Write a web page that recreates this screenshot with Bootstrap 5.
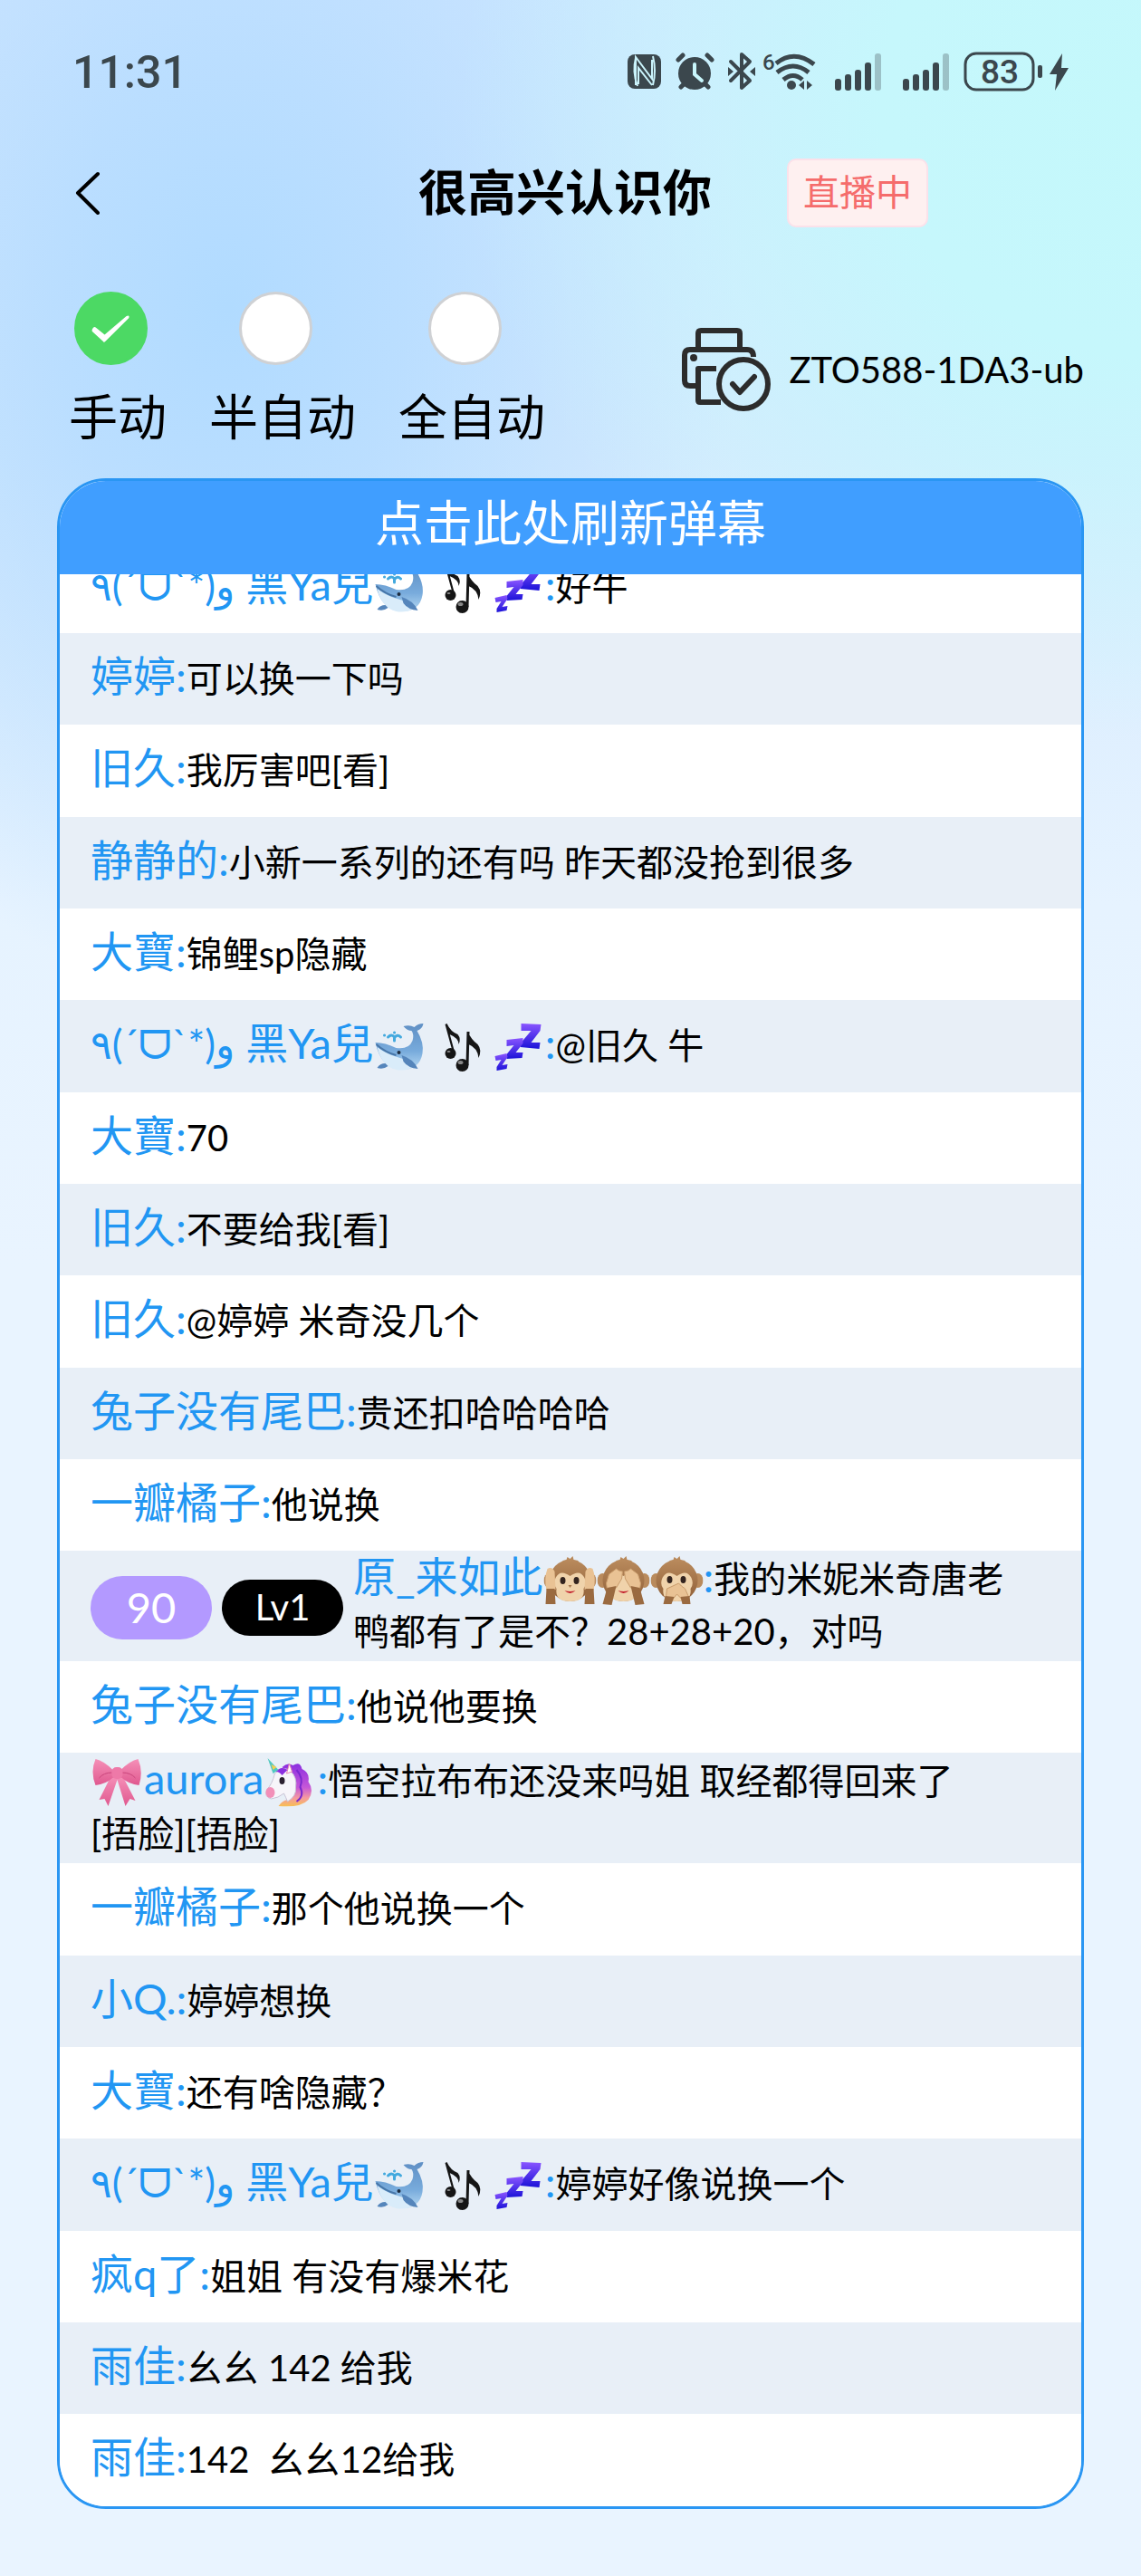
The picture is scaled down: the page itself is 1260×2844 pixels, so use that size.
<!DOCTYPE html>
<html lang="zh-CN">
<head>
<meta charset="utf-8">
<meta name="viewport" content="width=device-width, initial-scale=1">
<title>很高兴认识你</title>
<link rel="stylesheet" href="https://cdn.jsdelivr.net/npm/bootstrap@5.3.0/dist/css/bootstrap.min.css">
<style>
  body {
    font-family: Lato, "Noto Sans CJK SC", sans-serif;
    font-size: 40px;
    color: #000;
    background:
      radial-gradient(ellipse 780px 700px at 102% 4%, #c4f8fb 0%, #c6f7fc 40%, rgba(206, 244, 254, 0) 100%),
      radial-gradient(ellipse 560px 760px at 20% 340px, #b1dbff 0%, rgba(184, 221, 255, .9) 35%, rgba(210, 232, 255, 0) 100%),
      linear-gradient(#d0e6ff 0, #d5eafe 500px, #e6f3ff 1000px, #e9f4ff 1400px);
    background-repeat: no-repeat;
    background-color: #e9f4ff;
  }
  .status-bar { height: 156px; padding: 0 79px 0 80px; color: #3b474d; }
  .status-bar time { font: 500 50px/60px Roboto, sans-serif; padding-top: 4px; }
  .status-icons { gap: 8px; }
  .status-icons svg { height: 46px; fill: currentColor; }
  .status-icons text { font-family: Roboto, sans-serif; font-weight: 500; }
  .title-bar { display: grid; grid-template-columns: 1fr auto 1fr; align-items: center; height: 114px; padding: 0 75px 0 63px; }
  .title-bar h1 { font-size: 54px; line-height: 72px; }
  .back-btn { width: 66px; padding: 0 18px; text-align: left; }
  .live-tag { margin-left: 83px; padding: 0 16px; height: 76px; line-height: 70px; color: #f56c6c; background: #fef0f0; border: 2px solid #fbe1ea; border-radius: 10px; }
  .mode-bar { height: 258px; padding: 52px 63px 0 76px; }
  .mode-group { gap: 47px; }
  .mode-item { font-size: 54px; line-height: 80px; gap: 18px; }
  .mode-item .form-check-input { width: 81px; height: 81px; margin: 0 16px 0 0; border: 3px solid #cfd1d4; background-color: #fff; float: none; }
  .mode-item .form-check-input:checked {
    border-color: #4cd964; background-color: #4cd964; background-size: 100% 100%;
    background-image: url("data:image/svg+xml,%3Csvg xmlns='http://www.w3.org/2000/svg' viewBox='0 0 81 81'%3E%3Cpath fill='%23fff' d='M18 42q2-5 5-2l10 8L59 26q4-2 3 2L34 56q-2 2-3 0L18 44z'/%3E%3C/svg%3E");
  }
  .printer { gap: 20px; color: #000; height: 92px; margin-top: 40px; }
  .chat-card { margin: 0 63px 75px; border: 3px solid #2a96f3; border-radius: 54px; overflow: hidden; background: #fff; }
  .refresh-btn { width: calc(100% + 6px); height: 106px; margin: -3px -3px 0; border: 0; border-radius: 0; color: #fff; background: #409eff; font-size: 54px; line-height: 72px; padding: 0 0 6px; }
  .refresh-btn:hover { color: #fff; background: #409eff; }
  .chat-list { overflow: hidden; }
  .chat-row { display: flex; align-items: center; min-height: 101px; padding: 2px 66px 4px 34px; line-height: 58px; background: #fff; }
  .chat-row:nth-child(3n) { min-height: 102px; }
  .chat-row:nth-child(even) { background: #e8eff7; }
  .chat-row:first-child { margin-top: -36px; }
  .msg { white-space: pre-wrap; }
  .who { font-size: 47px; line-height: 52px; color: #2196f3; font-family: Lato, "Noto Sans CJK SC", "DejaVu Sans", sans-serif; }
  .kao { font-size: 44px; }
  .emo { width: 59px; height: 54px; vertical-align: -8px; margin: -6px 0; }
  .pill { flex: none; width: 134px; border-radius: 36px; color: #fff; text-align: center; margin: 6px 11px 0 0; }
  .pill-age { height: 70px; line-height: 68px; font-size: 47px; background: #b399ff; }
  .pill-lv { height: 62px; line-height: 60px; background: #000; }
</style>
<script src="https://cdn.jsdelivr.net/npm/bootstrap@5.3.0/dist/js/bootstrap.bundle.min.js"></script>
</head>
<body>

<svg width="0" height="0" class="position-absolute" aria-hidden="true">
  <defs>
    <linearGradient id="gWhale" x1="0" y1="0" x2="0" y2="1"><stop offset="0" stop-color="#5f8fc4"/><stop offset=".6" stop-color="#78abdc"/><stop offset="1" stop-color="#b5d8f2"/></linearGradient>
    <linearGradient id="gZ" x1="0" y1="0" x2="0" y2="1"><stop offset="0" stop-color="#8a55ff"/><stop offset="1" stop-color="#1b12d8"/></linearGradient>
    <linearGradient id="gFur" x1="0" y1="0" x2="0" y2="1"><stop offset="0" stop-color="#b98a5c"/><stop offset="1" stop-color="#8f5f38"/></linearGradient>
    <linearGradient id="gBow" x1="0" y1="0" x2="0" y2="1"><stop offset="0" stop-color="#f590b8"/><stop offset="1" stop-color="#e0588f"/></linearGradient>
    <linearGradient id="gMane" x1="0" y1="0" x2="0" y2="1"><stop offset="0" stop-color="#8b2fe0"/><stop offset=".55" stop-color="#c557d8"/><stop offset=".8" stop-color="#f59aa0"/><stop offset="1" stop-color="#f7c052"/></linearGradient>
    <symbol id="whale" viewBox="0 0 58 54">
      <path fill="url(#gWhale)" d="M1 22Q12 22 24 28Q38 30 42 20Q44 13 41 9Q36 9 32 4Q39 2 44 5Q48 1 54 1Q53 7 47 9Q55 22 53 34Q50 52 30 52Q8 52 1 22Z"/>
      <path fill="#d9ecfa" d="M3 27Q14 35 25 38Q37 41 43 49Q34 54 24 52Q8 48 3 27Z"/>
      <path fill="#5585bb" d="M30 36Q43 40 48 51Q37 50 32 43ZM12 45Q6 45 3 50Q10 52 15 48Z"/>
      <path fill="none" stroke="#4776a8" stroke-width="2" d="M2 24Q12 33 24 36"/>
      <circle cx="27" cy="33" r="2" fill="#1d2c3f"/>
      <path fill="none" stroke="#43a9de" stroke-width="3" stroke-linecap="round" d="M22 20V16Q19 12 15 16M22 17Q25 12 29 16M11 14h.1M22 11h.1"/>
    </symbol>
    <symbol id="notes" viewBox="0 0 58 54">
      <g fill="#151515"><ellipse cx="13" cy="34" rx="6" ry="6"/><path d="M9 1L18 34L16 35L7 2ZM9 1Q13 10 21 13Q25 18 22 24Q22 17 12 13Z"/>
      <ellipse cx="26" cy="47" rx="7" ry="7"/><path d="M31 10H34L33 47H30ZM32 10Q36 19 43 24Q48 30 44 39Q43 28 33 24Z"/></g>
      <ellipse cx="11" cy="32" rx="2" ry="1" fill="#888"/><ellipse cx="24" cy="44" rx="3" ry="2" fill="#888"/>
    </symbol>
    <symbol id="zzz" viewBox="0 0 58 54">
      <g fill="url(#gZ)"><path d="M32 1L54 2L53 9L43 22L53 22L52 29L31 27L32 22L43 9L32 9Z"/><path d="M16 19L34 17L34 23L26 33L34 33L33 39L16 40L16 35L24 25L16 26Z"/><path d="M3 37L16 34L17 38L11 47L17 46L16 51L5 53L5 49L10 41L4 42Z"/></g>
    </symbol>
    <symbol id="monkey" viewBox="0 0 58 54">
      <path fill="#b98a5c" d="M21 5L25 4L26 1L29 3L32 0L33 4L38 5V10H20Z"/>
      <ellipse cx="6" cy="27" rx="6" ry="8" fill="#b98a5c"/><ellipse cx="52" cy="27" rx="6" ry="8" fill="#b98a5c"/>
      <ellipse cx="29" cy="27" rx="23" ry="23" fill="url(#gFur)"/>
      <path fill="#f0d3ab" d="M29 22Q18 14 13 24Q10 31 14 36Q12 50 29 50Q46 50 44 36Q48 31 45 24Q40 14 29 22Z"/>
    </symbol>
    <symbol id="monkeyHear" viewBox="0 0 58 54">
      <use href="#monkey"/>
      <ellipse cx="21" cy="27" rx="3" ry="4" fill="#33241f"/><ellipse cx="36" cy="27" rx="3" ry="4" fill="#33241f"/>
      <path fill="#a87950" d="M27 32h4l-2 3z"/><path fill="#c4202c" d="M23 38Q29 40 35 38Q29 44 23 38Z"/>
      <path fill="#e9c294" d="M4 14Q9 11 12 17L13 37L3 38Q0 24 4 14ZM54 14Q49 11 46 17L45 37L55 38Q58 24 54 14Z"/>
      <path fill="#9a6a40" d="M3 36H12L13 53H2ZM46 36H55L56 53H45Z"/>
    </symbol>
    <symbol id="monkeySee" viewBox="0 0 58 54">
      <use href="#monkey"/>
      <path fill="#c4202c" d="M23 38Q29 40 35 38Q29 44 23 38Z"/>
      <path fill="#e9c294" stroke="#c99c6c" stroke-width="1" d="M10 30L13 20L21 14L24 16L28 17L27 25L21 35L11 37ZM48 30L45 20L37 14L34 16L30 17L31 25L37 35L47 37Z"/>
      <path fill="#9a6a40" d="M11 35L21 33L16 54L6 53ZM47 35L37 33L42 54L52 53Z"/>
    </symbol>
    <symbol id="monkeySpeak" viewBox="0 0 58 54">
      <use href="#monkey"/>
      <ellipse cx="21" cy="26" rx="3" ry="4" fill="#33241f"/><ellipse cx="36" cy="26" rx="3" ry="4" fill="#33241f"/>
      <path fill="#e9c294" stroke="#c99c6c" stroke-width="1" d="M17 45L18 36L31 30L34 33L38 36L42 45L35 48L29 42L24 48Z"/>
      <path fill="#9a6a40" d="M16 44L26 45L23 53H14ZM33 45L43 44L44 53H35Z"/>
    </symbol>
    <symbol id="bow" viewBox="0 0 58 54">
      <path fill="url(#gBow)" d="M22 20L9 46L15 45L19 53L29 24L38 53L43 45L49 47L35 20Z"/>
      <path fill="url(#gBow)" d="M24 13Q14 3 5 1Q-1 15 5 30Q16 29 25 21ZM33 13Q43 3 52 1Q58 15 53 30Q42 29 33 21Z"/>
      <path fill="none" stroke="#c9457c" stroke-width="1" d="M23 16Q14 16 9 22M34 16Q44 16 49 22"/>
      <rect x="23" y="10" width="12" height="13" rx="5" fill="#ee79a8"/>
    </symbol>
    <symbol id="unicorn" viewBox="0 0 58 54">
      <path fill="url(#gMane)" d="M20 10Q26 4 32 8Q40 3 42 12Q51 16 49 26Q56 36 49 46Q41 55 16 53Q20 47 26 46L28 18Z"/>
      <path fill="#f7f5fa" stroke="#c9c3d6" stroke-width="1" d="M12 17Q20 8 29 14Q37 21 35 33Q36 42 26 48Q24 43 22 39Q16 44 8 45Q0 43 3 35Q9 29 12 17Z"/>
      <ellipse cx="7" cy="38" rx="5" ry="6" fill="#f28fb8"/><path fill="#fff" stroke="#e783b5" d="M25 17L28 6L31 15Z"/>
      <path fill="#8b2fe0" d="M13 15Q19 8 26 13L20 19Q17 15 13 15Z"/><ellipse cx="20" cy="25" rx="3" ry="4" fill="#2b2030"/>
      <path fill="#52c8c0" d="M4 0L16 13L10 17Z"/><path fill="#f5cf4f" d="M8 7L14 10L10 13Z"/>
      <path fill="none" stroke="#7a28cf" stroke-width="2" d="M36 13Q44 22 40 32Q45 42 36 48"/>
    </symbol>
  </defs>
</svg>

<header>
  <div class="status-bar d-flex align-items-center justify-content-between">
    <time>11:31</time>
    <div class="status-icons d-flex align-items-center">
      <svg width="45" viewBox="0 0 45 46" role="img" aria-label="NFC"><rect y="5" width="37" height="38" rx="8"/><path fill="none" stroke="#cbf4fc" stroke-width="2" d="M9 39V8L27 32V11M9 9Q5 24 11 40M27 39L12 20V38M28 7Q32 23 28 39"/></svg>
      <svg width="50" viewBox="0 0 50 46" role="img" aria-label="闹钟"><circle cx="21" cy="26" r="18"/><path stroke="currentColor" stroke-width="5" stroke-linecap="round" d="M3 11L8 6M40 11L35 6M6 41L10 37M36 41L32 37"/><path fill="none" stroke="#c8f6fb" stroke-width="4" stroke-linecap="round" d="M21 16V27L29 34"/></svg>
      <svg width="30" viewBox="0 0 30 46" role="img" aria-label="蓝牙"><path fill="none" stroke="currentColor" stroke-width="4" stroke-linejoin="round" stroke-linecap="round" d="M3 13L24 34L15 42V5L24 13L3 34"/><path d="M0 19L6 24L0 29ZM30 19L24 24L30 29Z"/></svg>
      <svg width="72" viewBox="0 0 72 46" role="img" aria-label="Wi-Fi 6"><text x="0" y="22" font-size="24">6</text><path fill="none" stroke="currentColor" stroke-width="5" d="M15 15Q35 -1 57 16M16 25Q34 11 51 25M23 33Q34 24 44 33"/><circle cx="32" cy="39" r="5"/><path d="M40 39L46 34V44ZM55 39L49 34V44Z"/></svg>
      <svg width="67" viewBox="0 0 67 46" role="img" aria-label="信号"><rect y="32" width="7" height="13" rx="3"/><rect x="11" y="27" width="7" height="18" rx="3"/><rect x="22" y="22" width="7" height="23" rx="3"/><rect x="33" y="14" width="7" height="31" rx="3"/><rect x="44" y="4" width="7" height="41" rx="3" opacity=".3"/></svg>
      <svg width="59" viewBox="0 0 59 46" role="img" aria-label="信号"><rect y="32" width="7" height="13" rx="3"/><rect x="11" y="27" width="7" height="18" rx="3"/><rect x="22" y="22" width="7" height="23" rx="3"/><rect x="33" y="14" width="7" height="31" rx="3"/><rect x="44" y="4" width="7" height="41" rx="3" opacity=".3"/></svg>
      <svg width="87" viewBox="0 0 87 46" role="img" aria-label="电量 83%"><rect x="2" y="4" width="75" height="40" rx="12" fill="none" stroke="currentColor" stroke-width="3"/><rect x="82" y="17" width="5" height="14" rx="2"/><text x="40" y="37" font-size="37" text-anchor="middle">83</text></svg>
      <svg width="22" viewBox="0 0 22 46" role="img" aria-label="充电中"><path d="M14 4L0 27H8L6 45L21 20H13Z"/></svg>
    </div>
  </div>

  <div class="title-bar">
    <button type="button" class="btn back-btn" aria-label="返回"><svg class="d-block" width="30" height="48" viewBox="0 0 30 48" fill="none" stroke="#000" stroke-width="4" stroke-linecap="round" stroke-linejoin="round"><path d="M26 3L4 24L26 46"/></svg></button>
    <h1 class="m-0 fw-bold">很高兴认识你</h1>
    <div><span class="live-tag d-inline-block">直播中</span></div>
  </div>

  <div class="mode-bar d-flex justify-content-between align-items-start">
    <div class="mode-group d-flex">
      <div class="mode-item d-flex flex-column align-items-center"><input class="form-check-input" type="radio" name="mode" id="modeManual" checked><label for="modeManual">手动</label></div>
      <div class="mode-item d-flex flex-column align-items-center"><input class="form-check-input" type="radio" name="mode" id="modeSemi"><label for="modeSemi">半自动</label></div>
      <div class="mode-item d-flex flex-column align-items-center"><input class="form-check-input" type="radio" name="mode" id="modeAuto"><label for="modeAuto">全自动</label></div>
    </div>
    <a href="#" class="printer d-flex align-items-center text-decoration-none">
      <svg width="98" height="92" viewBox="0 0 98 92" fill="none" stroke="#2c2c2c" stroke-width="6" stroke-linecap="butt" stroke-linejoin="round" aria-hidden="true">
        <path d="M18 24V6Q18 3 21 3H61Q64 3 64 6V24"/>
        <path d="M18 64H9Q3 64 3 58V30Q3 24 9 24H72Q79 24 79 32"/>
        <path d="M38 45H18V80Q18 82 20 82H43"/>
        <circle cx="13" cy="33" r="4" fill="#2c2c2c" stroke="none"/>
        <circle cx="68" cy="62" r="27"/><path stroke-linecap="round" d="M56 62L64 71L80 54"/>
      </svg>
      <span>ZTO588-1DA3-ub</span>
    </a>
  </div>
</header>

<main class="chat-card">
  <button type="button" class="refresh-btn btn d-block">点击此处刷新弹幕</button>
  <div class="chat-list">
    <div class="chat-row"><div class="msg"><span class="who"><span class="kao">٩(ˊᗜˋ*)و</span> 黑Ya兒<svg class="emo"><use href="#whale"/></svg> <svg class="emo"><use href="#notes"/></svg><svg class="emo"><use href="#zzz"/></svg>:</span>好牛</div></div>
    <div class="chat-row"><div class="msg"><span class="who">婷婷:</span>可以换一下吗</div></div>
    <div class="chat-row"><div class="msg"><span class="who">旧久:</span>我厉害吧[看]</div></div>
    <div class="chat-row"><div class="msg"><span class="who">静静的:</span>小新一系列的还有吗 昨天都没抢到很多</div></div>
    <div class="chat-row"><div class="msg"><span class="who">大寶:</span>锦鲤sp隐藏</div></div>
    <div class="chat-row"><div class="msg"><span class="who"><span class="kao">٩(ˊᗜˋ*)و</span> 黑Ya兒<svg class="emo"><use href="#whale"/></svg> <svg class="emo"><use href="#notes"/></svg><svg class="emo"><use href="#zzz"/></svg>:</span>@旧久 牛</div></div>
    <div class="chat-row"><div class="msg"><span class="who">大寶:</span>70</div></div>
    <div class="chat-row"><div class="msg"><span class="who">旧久:</span>不要给我[看]</div></div>
    <div class="chat-row"><div class="msg"><span class="who">旧久:</span>@婷婷 米奇没几个</div></div>
    <div class="chat-row"><div class="msg"><span class="who">兔子没有尾巴:</span>贵还扣哈哈哈哈</div></div>
    <div class="chat-row"><div class="msg"><span class="who">一瓣橘子:</span>他说换</div></div>
    <div class="chat-row"><span class="pill pill-age">90</span><span class="pill pill-lv">Lv1</span><div class="msg"><span class="who">原_来如此<svg class="emo"><use href="#monkeyHear"/></svg><svg class="emo"><use href="#monkeySee"/></svg><svg class="emo"><use href="#monkeySpeak"/></svg>:</span>我的米妮米奇唐老鸭都有了是不？28+28+20，对吗</div></div>
    <div class="chat-row"><div class="msg"><span class="who">兔子没有尾巴:</span>他说他要换</div></div>
    <div class="chat-row"><div class="msg"><span class="who"><svg class="emo"><use href="#bow"/></svg>aurora<svg class="emo"><use href="#unicorn"/></svg>:</span>悟空拉布布还没来吗姐 取经都得回来了<span class="d-inline-block">[捂脸][捂脸]</span></div></div>
    <div class="chat-row"><div class="msg"><span class="who">一瓣橘子:</span>那个他说换一个</div></div>
    <div class="chat-row"><div class="msg"><span class="who">小Q.:</span>婷婷想换</div></div>
    <div class="chat-row"><div class="msg"><span class="who">大寶:</span>还有啥隐藏？</div></div>
    <div class="chat-row"><div class="msg"><span class="who"><span class="kao">٩(ˊᗜˋ*)و</span> 黑Ya兒<svg class="emo"><use href="#whale"/></svg> <svg class="emo"><use href="#notes"/></svg><svg class="emo"><use href="#zzz"/></svg>:</span>婷婷好像说换一个</div></div>
    <div class="chat-row"><div class="msg"><span class="who">疯q了:</span>姐姐 有没有爆米花</div></div>
    <div class="chat-row"><div class="msg"><span class="who">雨佳:</span>幺幺 142 给我</div></div>
    <div class="chat-row"><div class="msg"><span class="who">雨佳:</span>142  幺幺12给我</div></div>
  </div>
</main>

</body>
</html>
